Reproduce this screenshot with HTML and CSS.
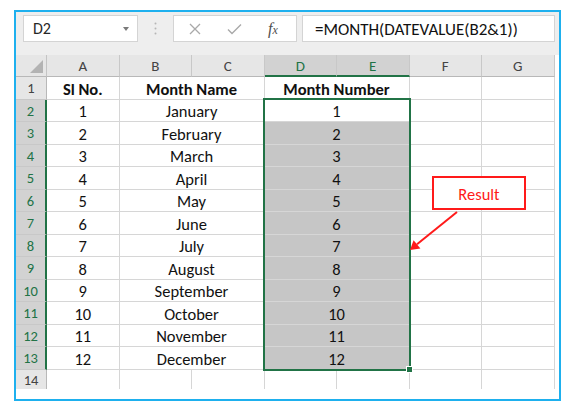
FILE: index.html
```html
<!DOCTYPE html>
<html>
<head>
<meta charset="utf-8">
<link rel="stylesheet" href="styles.css">
</head>
<body>
<div class="frame">
  <div class="fbar">
    <div class="namebox"><span>D2</span><span class="caret"></span></div>
    <div class="dots">
      <svg width="3" height="13" viewBox="0 0 3 13"><circle cx="1.5" cy="1.5" r="1" fill="#b5b5b5"/><circle cx="1.5" cy="6.5" r="1" fill="#b5b5b5"/><circle cx="1.5" cy="11.5" r="1" fill="#b5b5b5"/></svg>
    </div>
    <div class="tools">
      <svg class="ic-x" width="12" height="12" viewBox="0 0 12 12"><path d="M1 1L11 11M11 1L1 11" stroke="#a9a9a9" stroke-width="1.3" fill="none"/></svg>
      <svg class="ic-ok" width="15" height="12" viewBox="0 0 15 12"><path d="M1 6.5L5 10.5L14 1.5" stroke="#a9a9a9" stroke-width="1.4" fill="none"/></svg>
      <span class="fx"><i>f</i><span class="fxx">x</span></span>
    </div>
    <div class="formula">=MONTH(DATEVALUE(B2&amp;1))</div>
  </div>

  <div class="sheet">
    <div class="corner"><span class="tri"></span></div>
    <div class="ch">A</div><div class="ch">B</div><div class="ch">C</div>
    <div class="ch on">D</div><div class="ch on">E</div><div class="ch">F</div><div class="ch">G</div>

    <div class="rh">1</div><div class="c b">Sl No.</div><div class="c m b">Month Name</div><div class="c m b">Month Number</div><div class="c"></div><div class="c"></div>
    <div class="rh on">2</div><div class="c">1</div><div class="c m">January</div><div class="c m">1</div><div class="c"></div><div class="c"></div>
    <div class="rh on">3</div><div class="c">2</div><div class="c m">February</div><div class="c m g">2</div><div class="c"></div><div class="c"></div>
    <div class="rh on">4</div><div class="c">3</div><div class="c m">March</div><div class="c m g">3</div><div class="c"></div><div class="c"></div>
    <div class="rh on">5</div><div class="c">4</div><div class="c m">April</div><div class="c m g">4</div><div class="c"></div><div class="c"></div>
    <div class="rh on">6</div><div class="c">5</div><div class="c m">May</div><div class="c m g">5</div><div class="c"></div><div class="c"></div>
    <div class="rh on">7</div><div class="c">6</div><div class="c m">June</div><div class="c m g">6</div><div class="c"></div><div class="c"></div>
    <div class="rh on">8</div><div class="c">7</div><div class="c m">July</div><div class="c m g">7</div><div class="c"></div><div class="c"></div>
    <div class="rh on">9</div><div class="c">8</div><div class="c m">August</div><div class="c m g">8</div><div class="c"></div><div class="c"></div>
    <div class="rh on">10</div><div class="c">9</div><div class="c m">September</div><div class="c m g">9</div><div class="c"></div><div class="c"></div>
    <div class="rh on">11</div><div class="c">10</div><div class="c m">October</div><div class="c m g">10</div><div class="c"></div><div class="c"></div>
    <div class="rh on">12</div><div class="c">11</div><div class="c m">November</div><div class="c m g">11</div><div class="c"></div><div class="c"></div>
    <div class="rh on">13</div><div class="c">12</div><div class="c m">December</div><div class="c m g">12</div><div class="c"></div><div class="c"></div>
    <div class="rh last">14</div><div class="c last"></div><div class="c last"></div><div class="c last"></div><div class="c last"></div><div class="c last"></div><div class="c last"></div><div class="c last"></div>

    <div class="selection"><span class="handle"></span></div>
  </div>

  <div class="callout">Result</div>
  <svg class="arrow" width="543" height="387" viewBox="0 0 543 387">
    <line x1="441" y1="200" x2="401" y2="232.3" stroke="#ff1a1a" stroke-width="2"/>
    <polygon points="394,238 397.6,228.2 404.4,236.6" fill="#ff1a1a"/>
  </svg>
</div>
</body>
</html>
```

FILE: styles.css
```css
body {
  margin: 0;
  background: #ffffff;
  font-family: Calibri, Carlito, Lato, "Open Sans", sans-serif;
  color: #111111;
}

.frame {
  position: relative;
  margin: 10px 0 0 14px;
  width: 547px;
  height: 391px;
  box-sizing: border-box;
  border: 2px solid #1eb0ee;
  background: #ffffff;
}

/* formula bar */
.fbar {
  display: flex;
  align-items: flex-start;
  height: 43px;
  box-sizing: border-box;
  padding: 3px 4px 0 7px;
  background: #eeeeee;
}

.namebox {
  display: flex;
  align-items: center;
  width: 115px;
  height: 27px;
  box-sizing: border-box;
  padding-left: 9px;
  border: 1px solid #d4d4d4;
  background: #ffffff;
  font-size: 16px;
  color: #262626;
}

.caret {
  margin-left: auto;
  margin-right: 8px;
  width: 0;
  height: 0;
  border-left: 3px solid transparent;
  border-right: 3px solid transparent;
  border-top: 4px solid #7a7a7a;
}

.dots {
  display: flex;
  align-items: center;
  justify-content: center;
  width: 35px;
  height: 27px;
}

.tools {
  position: relative;
  display: flex;
  align-items: center;
  width: 124px;
  height: 27px;
  box-sizing: border-box;
  border: 1px solid #d4d4d4;
  background: #ffffff;
}

.ic-x {
  margin-left: 15px;
}

.ic-ok {
  margin-left: 26px;
}

.fx {
  margin-left: 26px;
  font-family: "Liberation Serif", serif;
  font-size: 16px;
  color: #505050;
}

.fxx {
  font-style: italic;
  font-size: 12px;
}

.formula {
  display: flex;
  align-items: center;
  flex: 1;
  margin-left: 5px;
  height: 27px;
  box-sizing: border-box;
  padding-left: 12px;
  padding-top: 1px;
  border: 1px solid #d4d4d4;
  background: #ffffff;
  font-size: 17px;
  color: #111111;
}

/* sheet grid */
.sheet {
  position: relative;
  display: grid;
  grid-template-columns: 31px repeat(7, 72.5px);
  grid-template-rows: 22px repeat(13, 22.5px) 19.5px;
  font-size: 16.5px;
}

.corner {
  position: relative;
  background: #e6e6e6;
  border-right: 1px solid #c4c4c4;
  border-bottom: 1px solid #b8b8b8;
}

.tri {
  position: absolute;
  right: 3px;
  bottom: 3px;
  width: 0;
  height: 0;
  border-left: 13px solid transparent;
  border-bottom: 13px solid #b3b3b3;
}

.ch {
  display: flex;
  align-items: center;
  justify-content: center;
  padding-top: 1px;
  background: #e6e6e6;
  border-right: 1px solid #c8c8c8;
  border-bottom: 1px solid #b8b8b8;
  font-size: 15px;
  color: #444444;
}

.ch.on {
  background: #d2d2d2;
  color: #217346;
  border-bottom: 2px solid #217346;
}

.rh {
  display: flex;
  align-items: center;
  justify-content: center;
  padding-top: 1px;
  background: #e6e6e6;
  border-right: 1px solid #b8b8b8;
  border-bottom: 1px solid #c8c8c8;
  font-size: 14.5px;
  color: #444444;
}

.rh.on {
  background: #d2d2d2;
  color: #217346;
  border-right: 2px solid #217346;
}

.c {
  display: flex;
  align-items: center;
  justify-content: center;
  padding-top: 2px;
  border-right: 1px solid #d6d6d6;
  border-bottom: 1px solid #d6d6d6;
  color: #111111;
}

.c.m {
  grid-column: span 2;
}

.c.b {
  font-weight: 700;
}

.c.g {
  background: #c6c6c6;
}

.rh.last,
.c.last {
  border-bottom: none;
}

.selection {
  position: absolute;
  grid-column: 5 / 7;
  grid-row: 3 / 15;
  top: -2px;
  left: -2px;
  right: -1px;
  bottom: -1px;
  border: 2px solid #217346;
}

.handle {
  position: absolute;
  right: -4px;
  bottom: -4px;
  width: 5px;
  height: 5px;
  background: #217346;
  border: 1px solid #ffffff;
}

/* annotation */
.callout {
  position: absolute;
  left: 416px;
  top: 164px;
  width: 94px;
  height: 34px;
  box-sizing: border-box;
  display: flex;
  align-items: center;
  justify-content: center;
  padding-top: 1px;
  border: 2px solid #ff1a1a;
  background: #ffffff;
  font-size: 16.5px;
  color: #ff1a1a;
}

.arrow {
  position: absolute;
  left: 0;
  top: 0;
}
```
